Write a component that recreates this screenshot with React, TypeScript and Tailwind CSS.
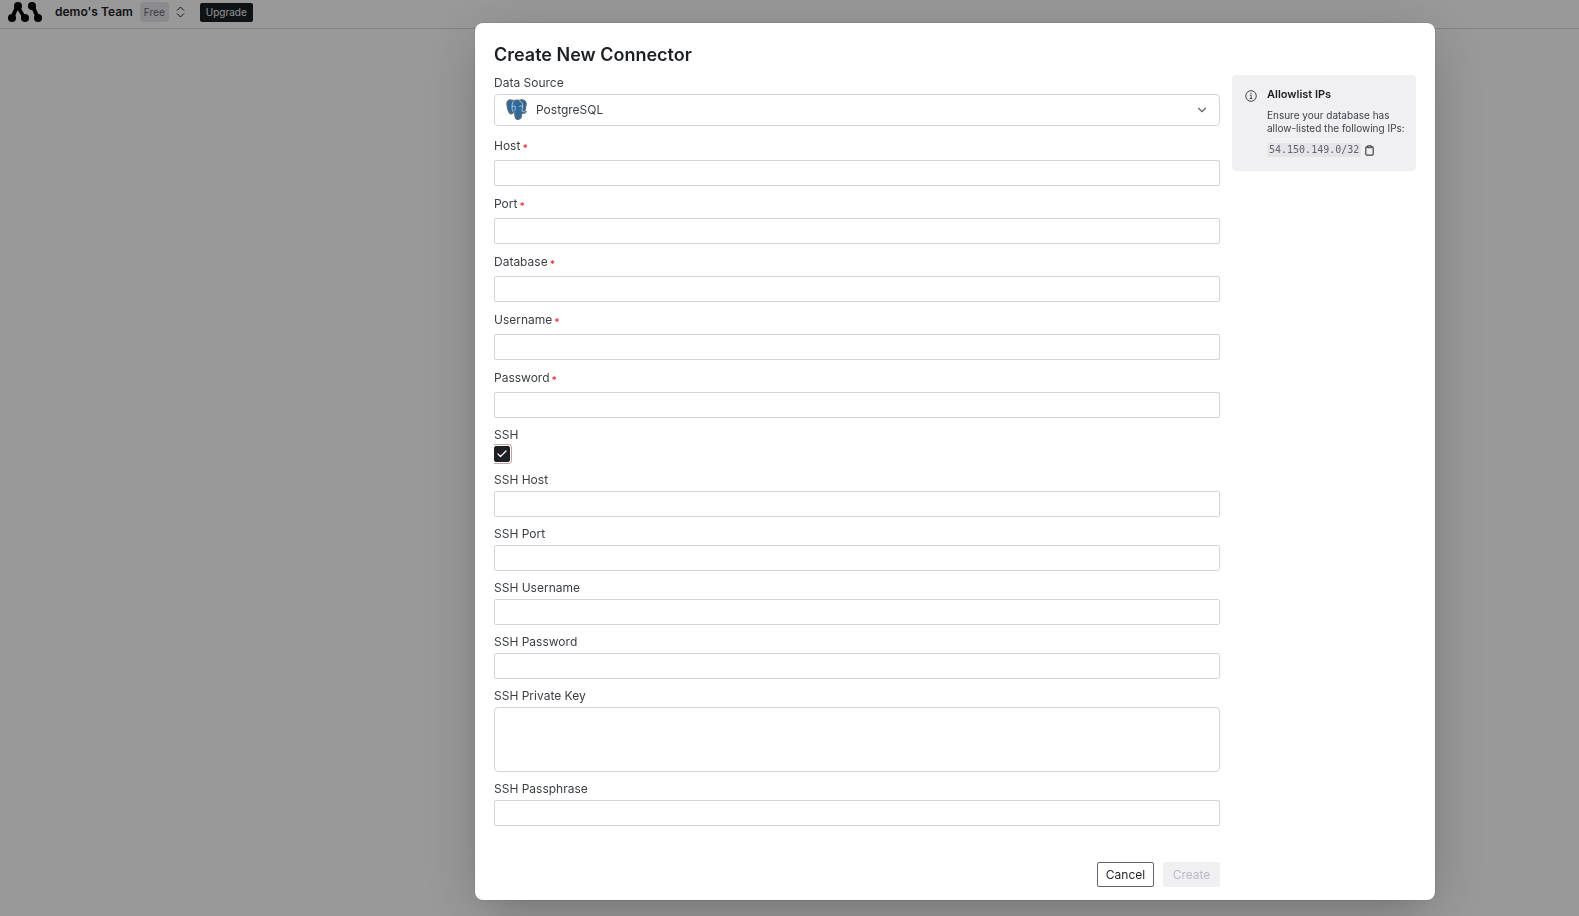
import { useState } from "react";
import { Check, ChevronDown, Clipboard } from "lucide-react";

type FieldProps = { id: string; label: string; type?: string };

const requiredFields: FieldProps[] = [
  { id: "host", label: "Host" },
  { id: "port", label: "Port" },
  { id: "database", label: "Database" },
  { id: "username", label: "Username" },
  { id: "password", label: "Password", type: "password" },
];

const sshFields: FieldProps[] = [
  { id: "ssh-host", label: "SSH Host" },
  { id: "ssh-port", label: "SSH Port" },
  { id: "ssh-username", label: "SSH Username" },
  { id: "ssh-password", label: "SSH Password", type: "password" },
];

const labelClass = "block text-xs leading-[18px]";
const boxClass = "block w-full border border-[#d3d5d9] bg-white px-2 text-xs outline-none focus:border-[#60646c]";

function Logo() {
  return (
    <svg width="34" height="20" viewBox="0 0 34 20" aria-hidden="true">
      <g fill="none" stroke="#000" strokeLinecap="round">
        <path d="M4 16 9 5M25 5l5 11" strokeWidth="4" />
        <path d="m10 5 6 10" strokeWidth="3.5" />
      </g>
      <circle cx="4" cy="16" r="4" />
      <circle cx="10" cy="4" r="4" />
      <circle cx="17" cy="16" r="4" />
      <circle cx="24" cy="4" r="4" />
      <circle cx="30" cy="16" r="4" />
    </svg>
  );
}

function PostgresIcon({ className }: { className?: string }) {
  return (
    <svg width="21" height="21" viewBox="0 0 24 24" className={className} aria-hidden="true">
      <path
        d="M5.500 1C2 .8.800 3 1 6c.3 4 1.700 8.500 3.300 10.400 1.400 1.600 3.200.2 4.500-1.200.7.500 1.100.6 1.200 1.300.2 2.500-.1 5 1.500 6.300 1.500 1.100 5 .5 5.700-1.500.5-1.500.4-3.500.6-4.800 2.300.3 4.300-.1 5.200-1.600.5-.8-.3-1.100-1.500-1C22 11 23.500 7 23 4.500 22 1 18.500.4 15.500 1.300 12.500.6 10 1.300 8.500 1.700 7.500 1.300 6.500 1 5.500 1z"
        fill="#2f6a9a"
        stroke="#66696c"
        strokeWidth="1.200"
      />
      <g fill="none" stroke="#dfe8ef" strokeWidth="0.800" strokeLinecap="round" strokeLinejoin="round">
        <path d="M8.500 2.500C6.500 5 7 8 7 11c0 2 .5 3 1.800 4.200" />
        <path d="M15.500 2c2.700 1.200 4.200 4 3.500 7-.3 1.800-.8 2.500-.5 4.500" />
        <path d="M7.200 8.500c1-.8 3.200-.8 3.500.3.3 1.500-.4 3-.7 4.400" />
        <path d="M15.500 8.500c.7-.6 2.200-.7 3.300-.2M18.400 14c1 .8 2.200.9 3.400.6" />
      </g>
    </svg>
  );
}

function InfoIcon() {
  return (
    <svg
      width="12"
      height="12"
      viewBox="0 0 15 15"
      fill="none"
      stroke="currentColor"
      className="mt-1 shrink-0"
      aria-hidden="true"
    >
      <circle cx="7.5" cy="7.5" r="6.600" strokeWidth="1.200" />
      <path d="M6 6.500h1.700v4M5.700 10.600h3.600" strokeWidth="1.100" />
      <circle cx="7.500" cy="4.300" r=".8" fill="currentColor" stroke="none" />
    </svg>
  );
}

function NavBar() {
  return (
    <header className="h-[29px] border-b border-[#d9d9e0] bg-white pl-2">
      <div className="flex h-6 items-center">
        <Logo />
        <span className="ml-[13px] text-xs font-semibold text-[#1c2024]">demo's Team</span>
        <span className="ml-[7px] rounded-sm bg-[#e8e8ec] px-1 text-[10px] leading-5 text-[#60646c]">Free</span>
        <button type="button" aria-label="Switch team" className="ml-[7px] text-[#1c2024]">
          <svg width="9" height="12" viewBox="0 0 9 12" fill="none" stroke="currentColor">
            <path d="M1 4.500 4.500 1 8 4.500M1 7.500 4.500 11 8 7.500" />
          </svg>
        </button>
        <button type="button" className="ml-[15px] h-[19px] rounded-xs bg-[#1c2024] px-1.5 text-[10px] text-[#f0f0f3]">
          Upgrade
        </button>
      </div>
    </header>
  );
}

function RequiredField({ id, label, type = "text" }: FieldProps) {
  return (
    <div className="mb-[9px]">
      <label htmlFor={id} className={`${labelClass} mb-[5px]`}>
        {label}
        <span className="ml-0.5 align-[-2px] text-[10px] leading-none font-semibold text-[#f0303c]">*</span>
      </label>
      <input id={id} type={type} required className={`${boxClass} h-[26px] rounded-xs`} />
    </div>
  );
}

function SshField({ id, label, type = "text" }: FieldProps) {
  return (
    <div className="mb-2">
      <label htmlFor={id} className={`${labelClass} mb-0.5`}>
        {label}
      </label>
      <input id={id} type={type} className={`${boxClass} h-[26px] rounded-xs`} />
    </div>
  );
}

function AllowlistCard() {
  return (
    <aside className="mt-px flex w-[184px] shrink-0 gap-2.5 self-start rounded-sm bg-[#f0f0f3] py-[11px] pr-2 pl-[13px]">
      <InfoIcon />
      <div>
        <h2 className="text-[11px] leading-4 font-semibold text-[#1c2024]">Allowlist IPs</h2>
        <p className="mt-[7px] text-[10px] leading-[13px]">Ensure your database has allow-listed the following IPs:</p>
        <div className="mt-2 flex items-center gap-[3px] pb-[3px]">
          <code className="rounded-xs bg-[#e4e4e9] px-0.5 font-['DejaVu_Sans_Mono',monospace] text-[10px] leading-[14px] text-[#60646c]">
            54.150.149.0/32
          </code>
          <button type="button" aria-label="Copy IP">
            <Clipboard size={11} strokeWidth={2.5} />
          </button>
        </div>
      </div>
    </aside>
  );
}

export default function App() {
  const [ssh, setSsh] = useState(true);

  return (
    <div className="min-h-screen bg-white font-['Inter','Liberation_Sans',sans-serif] text-[#3a3f45]">
      <NavBar />
      <div className="fixed inset-0 flex items-start justify-center overflow-auto bg-black/40 pt-[23px] pl-[331px]">
        <div
          role="dialog"
          aria-modal="true"
          aria-labelledby="dialog-title"
          className="w-full max-w-[960px] rounded-lg bg-white px-[19px] pt-[18px] pb-[13px] shadow-[0_0_0_1px_rgba(0,0,51,0.06),0_12px_60px_rgba(0,0,0,0.18),0_16px_36px_-20px_rgba(0,6,46,0.2)]"
        >
          <h1 id="dialog-title" className="mb-[5px] text-lg leading-7 font-semibold text-[#1c2024]">
            Create New Connector
          </h1>
          <div className="flex gap-3">
            <form className="min-w-0 flex-1" onSubmit={(e) => e.preventDefault()}>
              <label htmlFor="source" className={`${labelClass} mb-0.5`}>
                Data Source
              </label>
              <div className="relative mb-[11px]">
                <select
                  id="source"
                  defaultValue="postgres"
                  className="block h-8 w-full appearance-none rounded-sm border border-[#d3d5d9] bg-white pl-[41px] text-xs outline-none"
                >
                  <option value="postgres">PostgreSQL</option>
                  <option value="mysql">MySQL</option>
                </select>
                <PostgresIcon className="pointer-events-none absolute top-[5px] left-3" />
                <ChevronDown
                  size={14}
                  strokeWidth={2}
                  className="pointer-events-none absolute top-[9px] right-[11px] text-[#60646c]"
                />
              </div>

              {requiredFields.map((f) => (
                <RequiredField key={f.id} {...f} />
              ))}

              <div className="-mt-px mb-[7px]">
                <label htmlFor="ssh" className={labelClass}>
                  SSH
                </label>
                <div className="relative w-[18px] overflow-hidden py-0.5">
                  <input
                    id="ssh"
                    type="checkbox"
                    checked={ssh}
                    onChange={(e) => setSsh(e.target.checked)}
                    className="block size-4 appearance-none rounded-xs border border-[#1c2024] bg-white shadow-[0_0_0_1px_#fff,0_0_0_2px_#c8a49f] outline-none checked:bg-[#1c2024]"
                  />
                  {ssh && (
                    <Check size={12} strokeWidth={2.5} className="pointer-events-none absolute top-1 left-0.5 text-white" />
                  )}
                </div>
              </div>

              {sshFields.map((f) => (
                <SshField key={f.id} {...f} />
              ))}

              <div className="mb-2">
                <label htmlFor="ssh-key" className={`${labelClass} mb-0.5`}>
                  SSH Private Key
                </label>
                <textarea id="ssh-key" className={`${boxClass} h-[65px] resize-none rounded-sm`} />
              </div>

              <SshField id="ssh-passphrase" label="SSH Passphrase" type="password" />

              <div className="mt-9 flex justify-end gap-[9px]">
                <button
                  type="button"
                  className="h-[25px] w-[57px] rounded-xs border border-[#60646c] text-xs text-[#1c2024]"
                >
                  Cancel
                </button>
                <button type="submit" disabled className="h-[25px] w-[57px] rounded-xs bg-[#f0f0f3] text-xs text-[#b9bbc6]">
                  Create
                </button>
              </div>
            </form>
            <AllowlistCard />
          </div>
        </div>
      </div>
    </div>
  );
}
